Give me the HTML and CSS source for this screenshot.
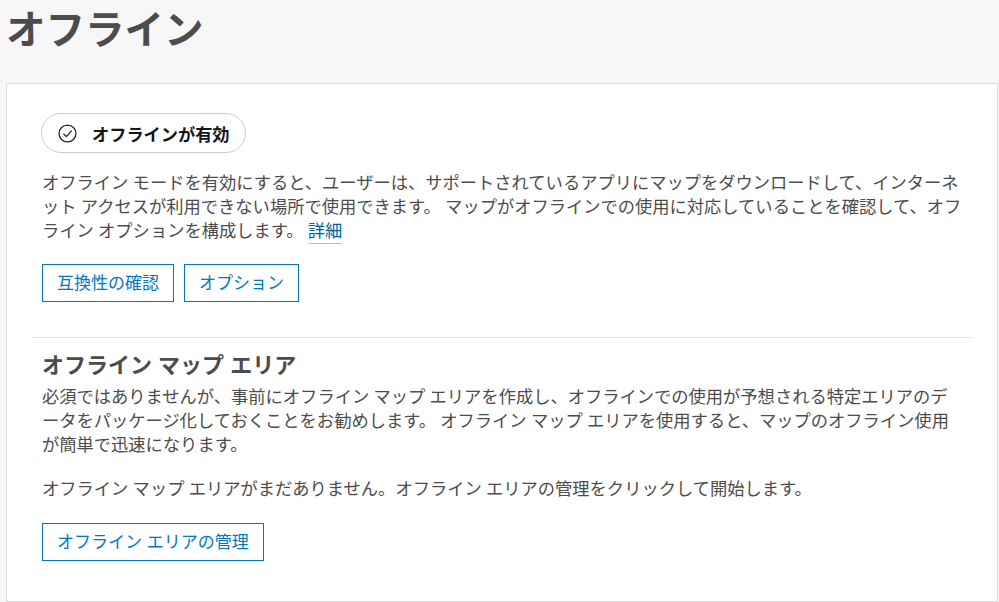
FILE: index.html
```html
<!DOCTYPE html>
<html lang="ja">
<head>
    <meta charset="UTF-8">
    <meta name="viewport" content="width=device-width, initial-scale=1.0">
    <title>オフライン</title>
    <link rel="stylesheet" href="styles.css">
</head>
<body>
    <h1 class="page-title">オフライン</h1>
    <div class="card">
        <section class="section section-first">
            <div class="status-pill">
                <svg class="status-icon" viewBox="0 0 18 18" width="19" height="19" aria-hidden="true">
                    <circle cx="9" cy="9" r="8" fill="none" stroke="#222" stroke-width="1.2"/>
                    <path d="M5.2 9.3 L7.9 12 L13 6.3" fill="none" stroke="#222" stroke-width="1.2"/>
                </svg>
                <span>オフラインが有効</span>
            </div>
            <p class="text">オフライン モードを有効にすると、ユーザーは、サポートされているアプリにマップをダウンロードして、インターネット アクセスが利用できない場所で使用できます。 マップがオフラインでの使用に対応していることを確認して、オフライン オプションを構成します。 <a class="link" href="#">詳細</a></p>
            <div class="buttons">
                <button class="btn">互換性の確認</button>
                <button class="btn">オプション</button>
            </div>
        </section>
        <section class="section section-areas">
            <h2 class="section-title">オフライン マップ エリア</h2>
            <p class="text">必須ではありませんが、事前にオフライン マップ エリアを作成し、オフラインでの使用が予想される特定エリアのデータをパッケージ化しておくことをお勧めします。 オフライン マップ エリアを使用すると、マップのオフライン使用が簡単で迅速になります。</p>
            <p class="text text-empty">オフライン マップ エリアがまだありません。オフライン エリアの管理をクリックして開始します。</p>
            <div class="buttons">
                <button class="btn">オフライン エリアの管理</button>
            </div>
        </section>
    </div>
</body>
</html>
```

FILE: styles.css
```css
html, body {
    height: 100%;
}
body {
    margin: 0;
    padding: 0 1px 0 6px;
    box-sizing: border-box;
    background-color: #f7f7f7;
    color: #4c4c4c;
    font-family: "Liberation Sans", "Noto Sans CJK JP", sans-serif;
    font-size: 17.27px;
    overflow: hidden;
}
.page-title {
    margin: 0;
    padding: 7px 0 0;
    height: 83px;
    box-sizing: border-box;
    font-size: 39.5px;
    line-height: 46px;
    font-weight: 700;
}
.card {
    height: 519px;
    box-sizing: border-box;
    padding: 0 25px;
    background-color: #fff;
    border: 1px solid #dcdcdc;
}
.section {
    padding: 0 10px;
}
.section-first {
    padding-top: 29px;
    padding-bottom: 35px;
    border-bottom: 1px solid #e6e6e6;
}
.section-areas {
    padding-top: 14px;
}
.status-pill {
    display: inline-flex;
    align-items: center;
    gap: 15px;
    height: 40px;
    margin-left: -1px;
    box-sizing: border-box;
    padding: 0 15px 0 16px;
    border: 1px solid #ccc;
    border-radius: 20px;
    color: #151515;
    font-size: 17.2px;
    font-weight: 700;
}
.text {
    margin: 18px 0 0;
    line-height: 24px;
    word-spacing: -0.5px;
}
.link {
    color: #00619b;
    text-decoration: none;
    padding-bottom: 2px;
    border-bottom: 1px solid #a9c6dc;
}
.buttons {
    display: flex;
    gap: 10px;
    margin-top: 21px;
}
.btn {
    height: 38px;
    padding: 0 14px 3px;
    background-color: #fff;
    border: 1px solid #0079c1;
    color: #0079c1;
    font-family: inherit;
    font-size: 17px;
}
.section-title {
    margin: 0;
    font-size: 22px;
    line-height: 28px;
    font-weight: 700;
}
.section-areas .text {
    margin-top: 5px;
    padding-right: 6px;
}
.section-areas .text-empty {
    margin-top: 20px;
}
.section-areas .buttons {
    margin-top: 22px;
}
```
